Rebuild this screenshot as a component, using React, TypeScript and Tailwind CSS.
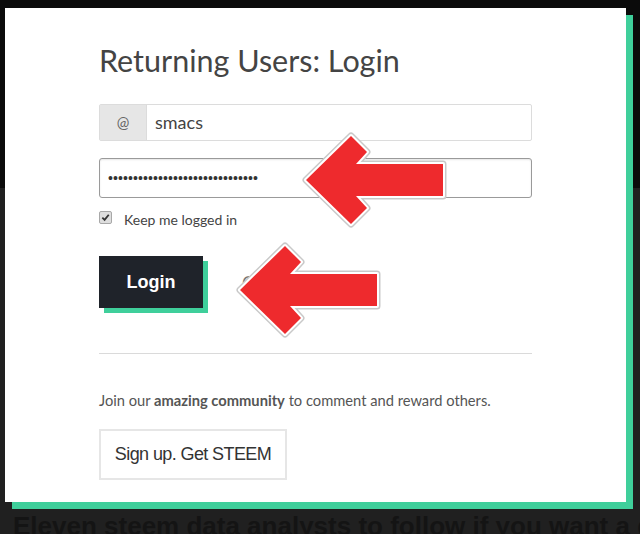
import React from "react";

const SANS = { fontFamily: "Lato, 'Open Sans', sans-serif" };
const ARIAL = { fontFamily: "'Liberation Sans', Arial, sans-serif" };

function RedArrow({ className }: { className: string }) {
  const d = "M0 44 L45 0 L61 16 L50 28 L137 28 L137 60 L50 60 L61 72 L45 88 Z";
  return (
    <svg className={className} width="147" height="98" viewBox="0 0 147 98">
      <g transform="translate(5 5)">
        <path d={d} fill="none" stroke="#c9c9c9" strokeWidth="7" strokeLinejoin="round" />
        <path d={d} fill="none" stroke="#ffffff" strokeWidth="4" strokeLinejoin="round" />
        <path d={d} fill="#ee2a2d" />
      </g>
    </svg>
  );
}

export default function App() {
  const dots = "•".repeat(30);

  return (
    <div className="relative h-[534px] w-[640px] overflow-hidden bg-[#202020]">
      {/* page behind the modal */}
      <div className="h-[188px] bg-[#0b0b0b]" />
      <div
        className="pt-[318px] pl-[13px] whitespace-nowrap text-[26px] font-bold leading-[40px] text-[#141414]"
        style={ARIAL}
      >
        Eleven steem data analysts to follow if you want a deeper understanding of steem
      </div>

      {/* modal */}
      <div className="absolute left-[5px] top-[8px] h-[494px] w-[621px] bg-white shadow-[7px_7px_0_#3fcf9b]">
        <div className="flex w-[527px] flex-col pl-[94px] pt-[34px]">
          <h1 className="text-[30.5px] font-normal leading-[36px] text-[#444]" style={SANS}>
            Returning Users: Login
          </h1>

          {/* username */}
          <div className="mt-[26px] flex h-[37px] rounded-[2px] border border-[#dcdcdc]">
            <div
              className="flex w-[47px] items-center justify-center border-r border-[#dcdcdc] bg-[#e6e6e6] text-[15px] text-[#666]"
              style={SANS}
            >
              @
            </div>
            <div className="flex items-center pl-[8px] text-[18px] text-[#444]" style={SANS}>
              smacs
            </div>
          </div>

          {/* password */}
          <div className="mt-[17px] flex h-[40px] items-center rounded-[3px] border border-[#9a9a9a] pl-[8px] shadow-[inset_0_1px_2px_rgba(0,0,0,0.1)]">
            <span className="text-[14px] leading-none tracking-[0.1px] text-[#333]" style={ARIAL}>
              {dots}
            </span>
          </div>

          {/* remember */}
          <div className="mt-[13px] flex h-[13px] items-center gap-[12px]">
            <span className="flex h-[13px] w-[13px] items-center justify-center rounded-[2px] border border-[#a8a8a8] bg-[#dedede]">
              <svg width="9" height="9" viewBox="0 0 10 10">
                <path d="M1.5 5.2 L4 7.6 L8.6 2" fill="none" stroke="#333" strokeWidth="2" />
              </svg>
            </span>
            <span className="pt-[4px] text-[14px] text-[#444]" style={SANS}>
              Keep me logged in
            </span>
          </div>

          {/* actions */}
          <div className="mt-[32px] flex items-center">
            <button
              className="flex h-[52px] w-[104px] items-center justify-center bg-[#1f232a] text-[18px] font-bold text-white shadow-[5px_5px_0_#3fcf9b]"
              style={ARIAL}
            >
              Login
            </button>
            <span className="ml-[39px] text-[18px] text-[#777]" style={SANS}>
              Cancel
            </span>
          </div>

          <div className="mt-[45px] h-px bg-[#dadada]" />

          <p className="mt-[36px] text-[14.7px] leading-[20px] text-[#555]" style={SANS}>
            Join our <span className="font-bold">amazing community</span> to comment and reward others.
          </p>

          <button
            className="mt-[19px] flex h-[51px] w-[188px] items-center justify-center border-2 border-[#e6e6e6] text-[18px] tracking-[-0.6px] text-[#333]"
            style={ARIAL}
          >
            Sign up. Get STEEM
          </button>
        </div>
      </div>

      <RedArrow className="absolute left-[301px] top-[131px]" />
      <RedArrow className="absolute left-[235px] top-[241px]" />
    </div>
  );
}
